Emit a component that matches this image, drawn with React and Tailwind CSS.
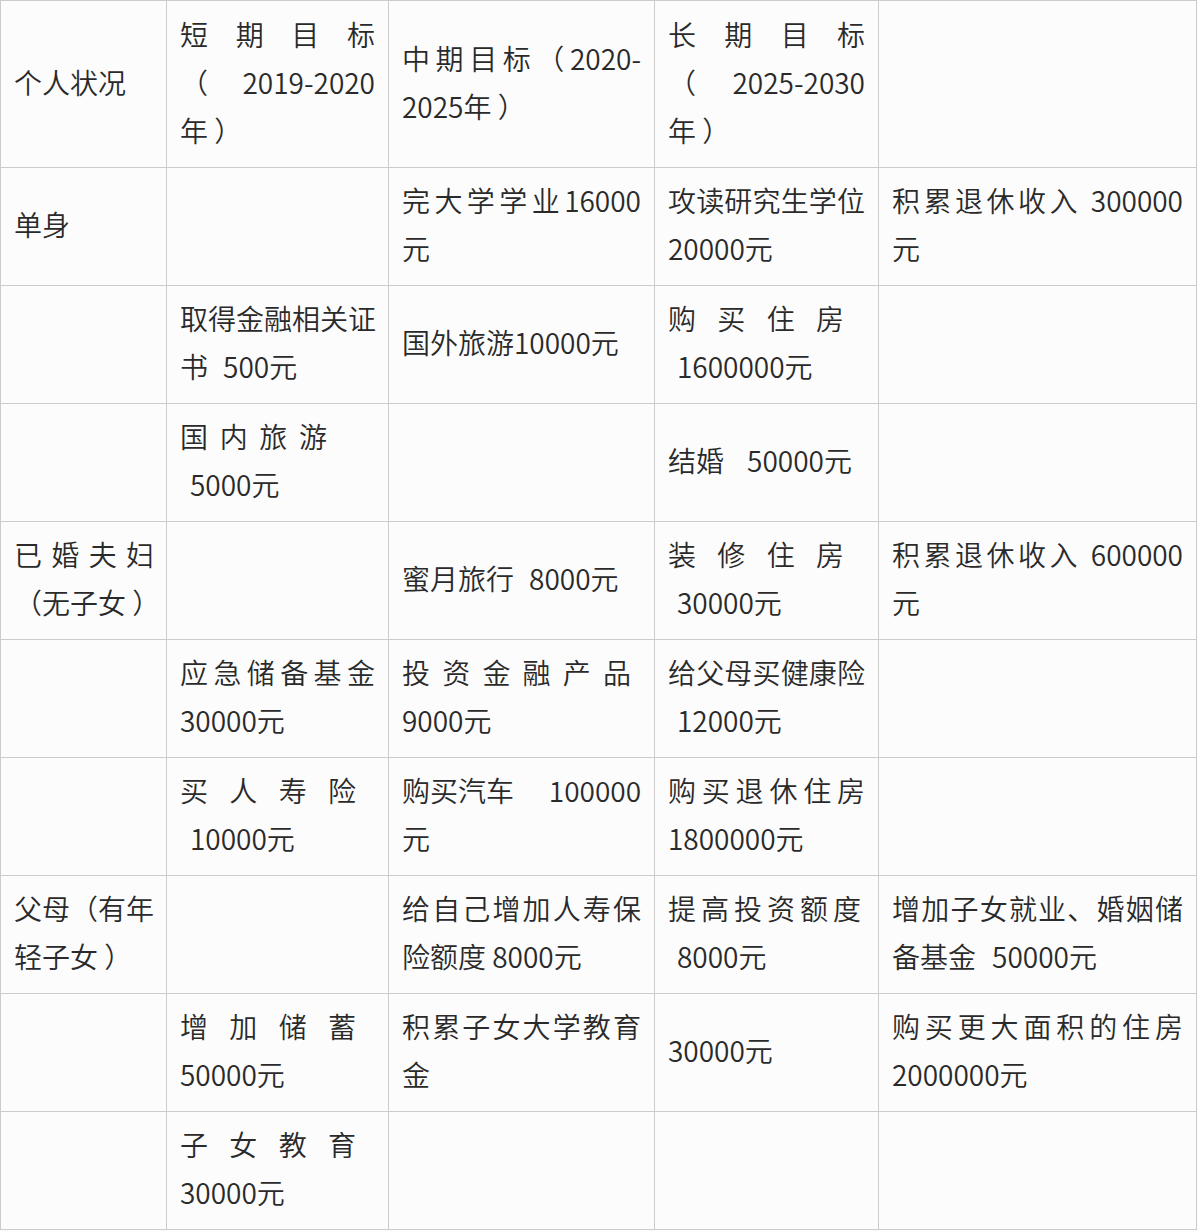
import React from "react";

const J = ({ children, className = "" }) => (
  <div className={"text-justify [text-align-last:justify] " + className}>{children}</div>
);
const L = ({ children, className = "" }) => (
  <div className={"whitespace-nowrap " + className}>{children}</div>
);

const Cell = ({ children, first = false }) => (
  <div
    className={
      "flex flex-col justify-center border-r border-b border-[#cccccc] pb-[5px] pl-[13px] " +
      (first ? "pr-[12px]" : "pr-[13px]")
    }
  >
    {children}
  </div>
);

export default function App() {
  return (
    <div className="min-h-screen bg-[#fcfcfd] font-['Noto_Sans_CJK_SC','Noto_Sans',sans-serif] text-[28px] font-[350] leading-[48px] text-[#2a2a2a]">
      <div className="grid w-[1197px] grid-cols-[166px_222px_266px_224px_318px] grid-rows-[167px_repeat(9,118px)] border-l border-t border-[#cccccc]">
        {/* Row 1 */}
        <Cell first>
          <L>个人状况</L>
        </Cell>
        <Cell>
          <J>短期目标</J>
          <J>（ 2019-2020</J>
          <L>年 ）</L>
        </Cell>
        <Cell>
          <J>中期目标（2020-</J>
          <L>2025年 ）</L>
        </Cell>
        <Cell>
          <J>长期目标</J>
          <J>（ 2025-2030</J>
          <L>年 ）</L>
        </Cell>
        <Cell />

        {/* Row 2 */}
        <Cell first>
          <L>单身</L>
        </Cell>
        <Cell />
        <Cell>
          <J>完大学学业16000</J>
          <L>元</L>
        </Cell>
        <Cell>
          <J>攻读研究生学位</J>
          <L>20000元</L>
        </Cell>
        <Cell>
          <J>积累退休收入 300000</J>
          <L>元</L>
        </Cell>

        {/* Row 3 */}
        <Cell first />
        <Cell>
          <J className="w-[196px]">取得金融相关证</J>
          <L>
            书<span className="ml-[15px]">500元</span>
          </L>
        </Cell>
        <Cell>
          <L>国外旅游10000元</L>
        </Cell>
        <Cell>
          <J className="w-[176px]">购买住房</J>
          <L className="pl-[9px]">1600000元</L>
        </Cell>
        <Cell />

        {/* Row 4 */}
        <Cell first />
        <Cell>
          <J className="w-[147px]">国内旅游</J>
          <L className="pl-[10px]">5000元</L>
        </Cell>
        <Cell />
        <Cell>
          <L>
            结婚<span className="ml-[23px]">50000元</span>
          </L>
        </Cell>
        <Cell />

        {/* Row 5 */}
        <Cell first>
          <J>已婚夫妇</J>
          <L>（无子女 ）</L>
        </Cell>
        <Cell />
        <Cell>
          <L>
            蜜月旅行<span className="ml-[15px]">8000元</span>
          </L>
        </Cell>
        <Cell>
          <J className="w-[176px]">装修住房</J>
          <L className="pl-[9px]">30000元</L>
        </Cell>
        <Cell>
          <J>积累退休收入 600000</J>
          <L>元</L>
        </Cell>

        {/* Row 6 */}
        <Cell first />
        <Cell>
          <J>应急储备基金</J>
          <L>30000元</L>
        </Cell>
        <Cell>
          <J className="w-[229px]">投资金融产品</J>
          <L>9000元</L>
        </Cell>
        <Cell>
          <J>给父母买健康险</J>
          <L className="pl-[9px]">12000元</L>
        </Cell>
        <Cell />

        {/* Row 7 */}
        <Cell first />
        <Cell>
          <J className="w-[176px]">买人寿险</J>
          <L className="pl-[10px]">10000元</L>
        </Cell>
        <Cell>
          <div className="flex justify-between whitespace-nowrap">
            <span>购买汽车</span>
            <span>100000</span>
          </div>
          <L>元</L>
        </Cell>
        <Cell>
          <J>购买退休住房</J>
          <L>1800000元</L>
        </Cell>
        <Cell />

        {/* Row 8 */}
        <Cell first>
          <L>父母（有年</L>
          <L>轻子女 ）</L>
        </Cell>
        <Cell />
        <Cell>
          <J>给自己增加人寿保</J>
          <L>险额度 8000元</L>
        </Cell>
        <Cell>
          <J className="w-[193px]">提高投资额度</J>
          <L className="pl-[9px]">8000元</L>
        </Cell>
        <Cell>
          <J>增加子女就业、婚姻储</J>
          <L>
            备基金<span className="ml-[16px]">50000元</span>
          </L>
        </Cell>

        {/* Row 9 */}
        <Cell first />
        <Cell>
          <J className="w-[176px]">增加储蓄</J>
          <L>50000元</L>
        </Cell>
        <Cell>
          <J>积累子女大学教育</J>
          <L>金</L>
        </Cell>
        <Cell>
          <L>30000元</L>
        </Cell>
        <Cell>
          <J>购买更大面积的住房</J>
          <L>2000000元</L>
        </Cell>

        {/* Row 10 */}
        <Cell first />
        <Cell>
          <J className="w-[176px]">子女教育</J>
          <L>30000元</L>
        </Cell>
        <Cell />
        <Cell />
        <Cell />
      </div>
    </div>
  );
}
